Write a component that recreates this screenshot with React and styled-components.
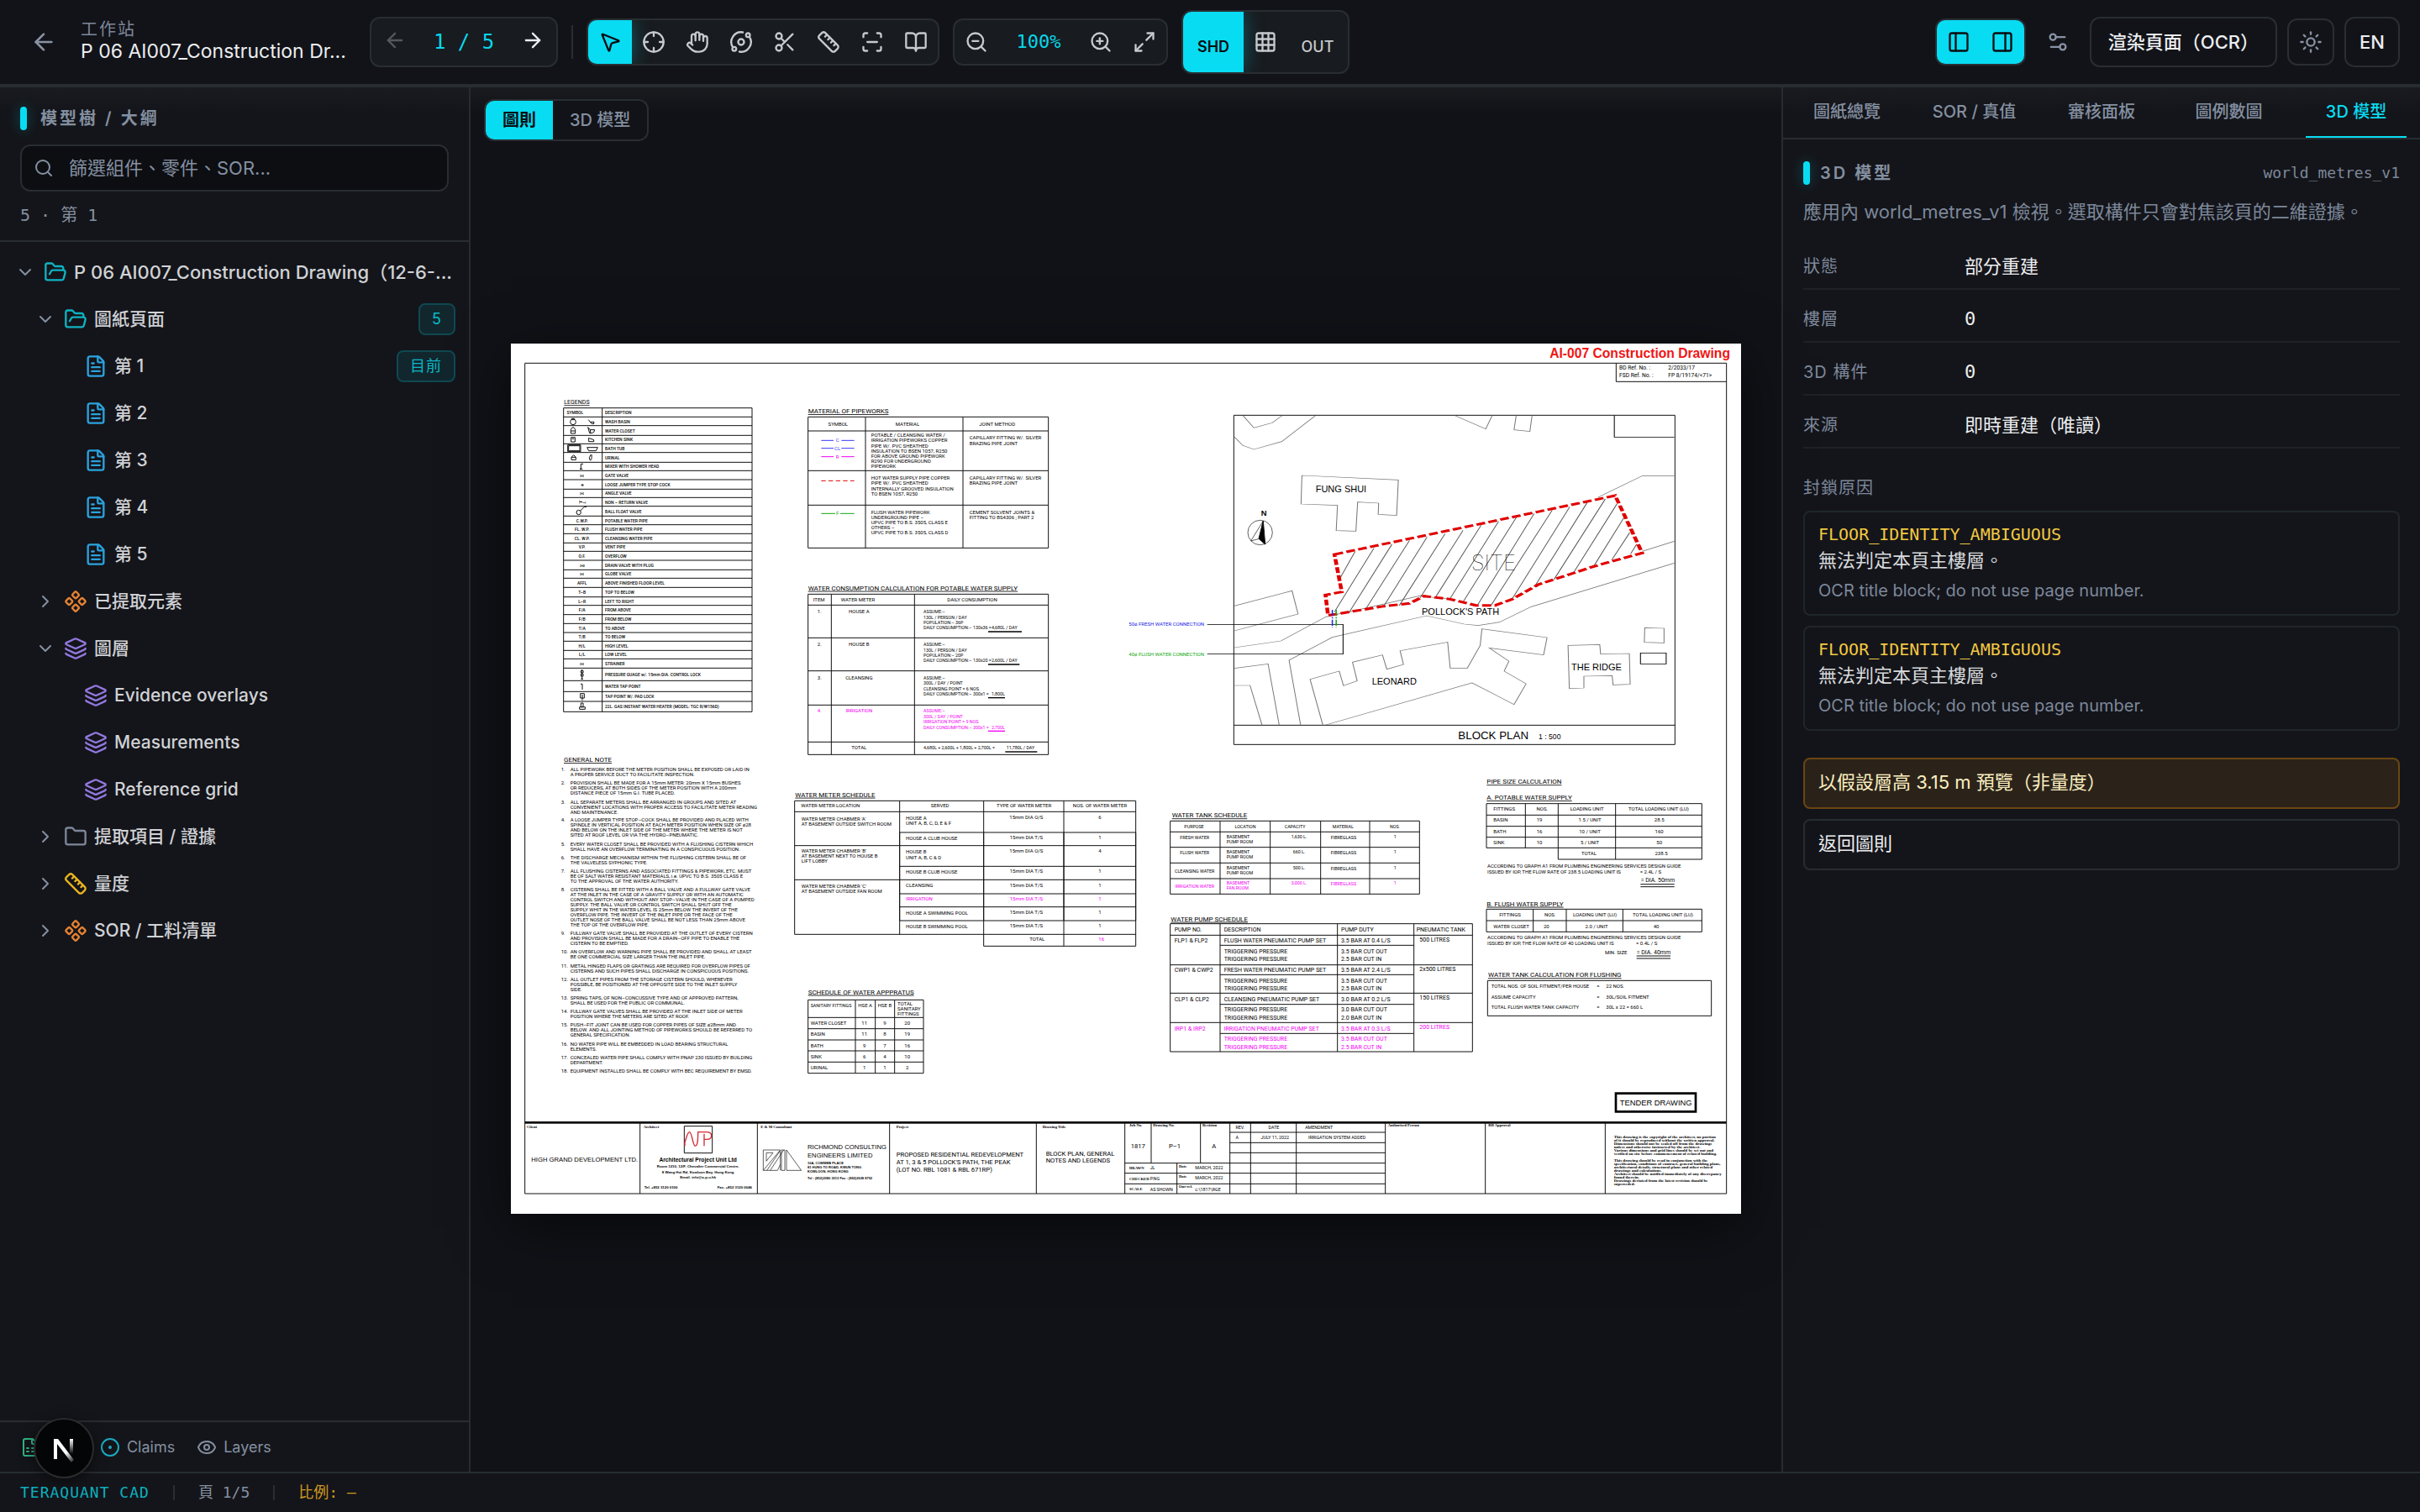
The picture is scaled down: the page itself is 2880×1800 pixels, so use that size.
import React from "react";
import styled, { createGlobalStyle, css } from "styled-components";
import {
  ArrowLeft,
  ArrowRight,
  BookOpen,
  ChevronDown,
  ChevronRight,
  CircleDot,
  Component,
  Crosshair,
  Eye,
  FileSpreadsheet,
  FileText,
  Folder,
  FolderOpen,
  Grid3x3,
  Hand,
  Layers,
  Maximize2,
  MousePointer2,
  Orbit,
  PanelLeft,
  PanelRight,
  Ruler,
  ScanLine,
  Scissors,
  Search,
  Settings2,
  Sun,
  ZoomIn,
  ZoomOut,
} from "lucide-react";

const GlobalStyle = createGlobalStyle`
  * {
    box-sizing: border-box;
  }

  body {
    margin: 0;
    background: #111217;
    color: #eceef0;
    font-family: "Inter", "Noto Sans CJK TC", sans-serif;
    font-size: 22px;
    line-height: 32px;
  }

  button,
  input {
    font: inherit;
    color: inherit;
    background: none;
    border: none;
    padding: 0;
    margin: 0;
  }

  button {
    cursor: pointer;
  }

  svg {
    display: block;
    flex: none;
  }
`;

const mono = css`
  font-family: "DejaVu Sans Mono", "Noto Sans CJK TC", monospace;
`;

/* ---------- data ---------- */

const TOOLS = [
  { label: "Select", icon: MousePointer2, active: true },
  { label: "Target", icon: Crosshair },
  { label: "Pan", icon: Hand },
  { label: "Orbit", icon: Orbit },
  { label: "Section", icon: Scissors },
  { label: "Measure", icon: Ruler },
  { label: "Scan", icon: ScanLine },
  { label: "Notes", icon: BookOpen },
];

const TREE = [
  { level: 0, open: true, icon: FolderOpen, color: "#0fb3c2", text: "P 06 AI007_Construction Drawing（12-6-..." },
  { level: 1, open: true, icon: FolderOpen, color: "#0fb3c2", text: "圖紙頁面", badge: "5" },
  { level: 2, icon: FileText, color: "#2ba3df", text: "第 1", badge: "目前" },
  { level: 2, icon: FileText, color: "#2ba3df", text: "第 2" },
  { level: 2, icon: FileText, color: "#2ba3df", text: "第 3" },
  { level: 2, icon: FileText, color: "#2ba3df", text: "第 4" },
  { level: 2, icon: FileText, color: "#2ba3df", text: "第 5" },
  { level: 1, open: false, icon: Component, color: "#e58233", text: "已提取元素" },
  { level: 1, open: true, icon: Layers, color: "#9279e0", text: "圖層" },
  { level: 2, icon: Layers, color: "#9279e0", text: "Evidence overlays" },
  { level: 2, icon: Layers, color: "#9279e0", text: "Measurements" },
  { level: 2, icon: Layers, color: "#9279e0", text: "Reference grid" },
  { level: 1, open: false, icon: Folder, color: "#7d889a", text: "提取項目 / 證據" },
  { level: 1, open: false, icon: Ruler, color: "#e9b320", text: "量度" },
  { level: 1, open: false, icon: Component, color: "#e58233", text: "SOR / 工料清單" },
];

const TABS = ["圖紙總覽", "SOR / 真值", "審核面板", "圖例數圖", "3D 模型"];

const FACTS = [
  ["狀態", "部分重建"],
  ["樓層", "0"],
  ["3D 構件", "0"],
  ["來源", "即時重建（唯讀）"],
];

const BLOCKERS = [1, 2];

/* ---------- shell ---------- */

const Shell = styled.div`
  display: grid;
  grid-template-rows: auto minmax(0, 1fr) auto;
  height: 100vh;
`;

const Header = styled.header`
  display: flex;
  align-items: center;
  gap: 16px;
  height: 104px;
  padding: 0 24px;
  background: #121318;
  border-bottom: 4px solid #272d31;
`;

const BackButton = styled.button`
  display: grid;
  place-items: center;
  width: 56px;
  height: 56px;
  color: #8892a3;
`;

const Heading = styled.div`
  width: 328px;
  padding-bottom: 4px;
`;

const Crumb = styled.div`
  font-size: 20px;
  line-height: 26px;
  letter-spacing: 2px;
  color: #7d889a;
`;

const Title = styled.h1`
  margin: 0;
  font-size: 23px;
  line-height: 26px;
  font-weight: 400;
  white-space: nowrap;
`;

const Group = styled.div`
  display: flex;
  flex: none;
  align-items: stretch;
  border: 2px solid #282e32;
  border-radius: 12px;
  overflow: hidden;
  background: #181b1f;
`;

const Pager = styled(Group)`
  width: 224px;
  height: 60px;
  padding: 0 2px;
  justify-content: space-between;
`;

const Readout = styled.span`
  ${mono}
  display: grid;
  place-items: center;
  width: 96px;
  font-size: ${(p) => (p.$large ? 24 : 22)}px;
  color: #06d8ec;
`;

const Tool = styled.button`
  display: grid;
  place-items: center;
  width: 52px;
  height: 52px;
  color: ${(p) => (p.$active ? "#0b0d11" : "#c6c9cd")};

  &:disabled {
    color: #53585f;
  }

  ${(p) =>
    p.$active &&
    css`
      background: #08dcf2;
      box-shadow: 0 0 24px rgba(8, 220, 242, 0.35);
    `}
`;

const ModeTool = styled(Tool)`
  width: ${(p) => (p.$wide ? 72 : 52)}px;
  height: 72px;
  padding-top: ${(p) => (p.$wide ? 12 : 0)}px;
  font-size: 18px;
  font-weight: ${(p) => (p.$active ? 600 : 500)};
`;

const Separator = styled.span`
  flex: none;
  width: 2px;
  height: ${(p) => (p.$small ? 18 : 40)}px;
  background: #282e32;
`;

const HeaderEnd = styled.div`
  display: flex;
  align-items: center;
  gap: 12px;
  margin-left: auto;
`;

const GhostButton = styled.button`
  display: grid;
  place-items: center;
  height: 56px;
  width: ${(p) => (p.$bare ? 52 : 56)}px;
  color: #8892a3;
  border: ${(p) => (p.$bare ? "none" : "2px solid #282e32")};
  border-radius: 12px;
`;

const TextButton = styled.button`
  height: 60px;
  padding: 0 ${(p) => (p.$tight ? 16 : 20)}px;
  font-weight: 500;
  border: 2px solid #282e32;
  border-radius: 12px;
`;

const Workspace = styled.div`
  display: grid;
  grid-template-columns: 560px minmax(0, 1fr) 760px;
  min-height: 0;
`;

const panelGlow = css`
  background: linear-gradient(#191b1f, #14151a 30px);
`;

/* ---------- left panel ---------- */

const Sidebar = styled.aside`
  display: flex;
  flex-direction: column;
  min-height: 0;
  border-right: 2px solid #272b30;
  ${panelGlow}
`;

const SidebarHead = styled.div`
  padding: 22px 24px 14px;
  border-bottom: 2px solid #272d31;
`;

const SectionTitle = styled.h2`
  display: flex;
  align-items: center;
  gap: ${(p) => p.$gap}px;
  margin: 0;
  font-size: 20px;
  line-height: 30px;
  font-weight: 600;
  letter-spacing: 3px;
  color: #8490a1;

  &::before {
    content: "";
    width: 8px;
    height: 28px;
    border-radius: 4px;
    background: #08dcf2;
    box-shadow: 0 0 16px rgba(8, 220, 242, 0.3);
  }
`;

const SearchBox = styled.label`
  display: flex;
  align-items: center;
  gap: 18px;
  height: 56px;
  margin-top: 16px;
  padding: 0 14px;
  color: #8490a1;
  background: #0d0e12;
  border: 2px solid #272d31;
  border-radius: 12px;

  input {
    flex: 1;
    min-width: 0;
    outline: none;
  }

  input::placeholder {
    color: #8490a1;
    opacity: 1;
  }
`;

const Position = styled.p`
  ${mono}
  margin: 12px 0 0;
  font-size: 20px;
  line-height: 32px;
  color: #8490a1;
`;

const Tree = styled.ul`
  flex: 1;
  min-height: 0;
  margin: 0;
  padding: 8px 16px 8px 18px;
  list-style: none;
`;

const TreeRow = styled.li`
  display: flex;
  align-items: center;
  height: 56px;
  padding-left: ${(p) => p.$level * 24}px;
  font-size: ${(p) => (p.$level ? 21 : 22)}px;
  color: #d0d2d6;
`;

const Twisty = styled.span`
  width: 24px;
  height: 24px;
  margin-right: 10px;
  color: #8490a1;
`;

const TreeLabel = styled.span`
  flex: 1;
  min-width: 0;
  padding-left: 8px;
  font-weight: 500;
  white-space: nowrap;
`;

const Badge = styled.span`
  padding: 0 14px;
  font-size: 18px;
  line-height: 34px;
  letter-spacing: 1px;
  color: #0cb9c9;
  background: #11272d;
  border: 2px solid #104850;
  border-radius: 8px;
`;

const SidebarFoot = styled.div`
  display: flex;
  align-items: center;
  gap: 26px;
  height: 61px;
  padding: 0 24px;
  border-top: 2px solid #272d31;
`;

const FootItem = styled.span`
  display: flex;
  align-items: center;
  gap: 8px;
  font-size: 18px;
  color: #8490a1;
`;

/* ---------- canvas ---------- */

const Canvas = styled.main`
  position: relative;
  display: flex;
  align-items: center;
  justify-content: center;
  padding: 0 48px 2px;
  min-width: 0;
  background: linear-gradient(#191b1f, #111217 30px);
`;

const ViewSwitch = styled(Group)`
  position: absolute;
  top: 14px;
  left: 16px;
  background: #121318;
`;

const ViewButton = styled.button`
  height: 46px;
  padding: 0 20px;
  font-size: 20px;
  font-weight: ${(p) => (p.$active ? 600 : 500)};
  color: ${(p) => (p.$active ? "#0b0d11" : "#8490a1")};
  background: ${(p) => (p.$active ? "#08dcf2" : "none")};
`;

const Sheet = styled.svg`
  width: 100%;
  background: #ffffff;
  box-shadow: 0 16px 64px rgba(0, 0, 0, 0.55);

  text {
    stroke: none;
  }
`;

/* ---------- right panel ---------- */

const Inspector = styled.aside`
  border-left: 2px solid #272b30;
  ${panelGlow}
`;

const TabBar = styled.div`
  display: flex;
  justify-content: space-between;
  height: 62px;
  padding: 0 16px;
  border-bottom: 2px solid #272d31;
`;

const Tab = styled.button`
  width: 120px;
  height: 60px;
  white-space: nowrap;
  font-size: 20px;
  font-weight: 500;
  color: ${(p) => (p.$active ? "#08dcf2" : "#8490a1")};
  border-bottom: 2px solid ${(p) => (p.$active ? "#08dcf2" : "transparent")};
`;

const InspectorBody = styled.div`
  padding: 24px;
`;

const TitleLine = styled.div`
  display: flex;
  align-items: center;
  justify-content: space-between;
`;

const Schema = styled.span`
  ${mono}
  font-size: 18px;
  color: #7d889a;
`;

const Lead = styled.p`
  margin: 14px 0;
  line-height: 32px;
  color: #7d889a;
`;

const Facts = styled.dl`
  margin: 0;
`;

const Fact = styled.div`
  display: grid;
  grid-template-columns: 192px 1fr;
  align-items: center;
  height: 63px;
  padding-top: 8px;
  border-bottom: 2px solid #1e2126;

  dt {
    font-size: 20px;
    letter-spacing: 1px;
    color: #7d889a;
  }

  dd {
    margin: 0;
  }
`;

const Digits = styled.span`
  ${mono}
`;

const SubTitle = styled.h3`
  margin: 32px 0 12px;
  font-size: 20px;
  line-height: 30px;
  font-weight: 400;
  letter-spacing: 1px;
  color: #7d889a;
`;

const Blocker = styled.div`
  margin-bottom: 12px;
  padding: 12px 16px;
  border: 2px solid #20272b;
  border-radius: 8px;
  color: #d8dadd;

  code {
    ${mono}
    display: block;
    font-size: 20px;
    line-height: 28px;
    color: #f3c942;
  }

  p {
    margin: 0;
    line-height: 35px;
  }

  small {
    display: block;
    margin-top: 2px;
    font-size: 20px;
    line-height: 32px;
    color: #7d889a;
  }
`;

const WideButton = styled.button`
  display: block;
  width: 100%;
  height: 61px;
  margin-top: ${(p) => (p.$amber ? 32 : 12)}px;
  padding: 0 16px 3px;
  text-align: left;
  border: 2px solid ${(p) => (p.$amber ? "#6b4613" : "#272d31")};
  border-radius: 8px;
  color: ${(p) => (p.$amber ? "#fbefc0" : "#eceef0")};
  background: ${(p) => (p.$amber ? "#2b231a" : "none")};
`;

/* ---------- status bar ---------- */

const StatusBar = styled.footer`
  ${mono}
  display: flex;
  align-items: center;
  gap: 28px;
  height: 48px;
  padding: 0 24px;
  font-size: 18px;
  color: #8490a1;
  background: #14151a;
  border-top: 2px solid #272d31;
`;

const Brand = styled.span`
  letter-spacing: 1px;
  color: #0cb0bf;
`;

const Scale = styled.span`
  color: #cf9a1f;
`;

const DevBadge = styled.button`
  position: fixed;
  left: 40px;
  bottom: 40px;
  width: 72px;
  height: 72px;
  border-radius: 50%;
  background: #040506;
  border: 2px solid #2a2b2c;
  box-shadow: 0 4px 16px rgba(0, 0, 0, 0.5);
`;

/* ---------- drawing sheet ---------- */
// Sheet units: 3 per screen pixel at 100% zoom.

const CAD = `"Roboto", "Liberation Sans", sans-serif`;
const ARIAL = `"Liberation Sans", sans-serif`;
const SERIF = `"Liberation Serif", serif`;
const MAGENTA = "#f400f4";

const T = ({ x, y, s = 18, c = "#000", a = "start", u, f, w, children }) => (
  <text
    x={x}
    y={y}
    fontSize={s}
    fill={c}
    textAnchor={a}
    fontFamily={f}
    fontWeight={w}
    textDecoration={u ? "underline" : undefined}
  >
    {children}
  </text>
);

const Lines = ({ x, ys, rows, ...rest }) =>
  rows.map((row, i) => (
    <T key={i} x={x} y={Array.isArray(ys) ? ys[i] : ys + i * 18} {...rest}>
      {row}
    </T>
  ));

const Mesh = ({ xs, ys }) => {
  const right = xs[xs.length - 1];
  const bottom = ys[ys.length - 1];
  const d =
    xs.map((x) => `M${x} ${ys[0]}V${bottom}`).join("") +
    ys.map((y) => `M${xs[0]} ${y}H${right}`).join("");
  return <path d={d} />;
};

const LEGEND_YS = [
  230, 262, 293, 328, 358, 389, 424, 454, 486, 520, 550, 581, 616, 647, 679, 712, 742, 774, 808,
  838, 871, 905, 935, 968, 1000, 1032, 1063, 1096, 1126, 1159, 1204, 1243, 1278, 1315,
];

const LEGEND = [
  ["SYMBOL", "DESCRIPTION"],
  ["", "WASH BASIN"],
  ["", "WATER CLOSET"],
  ["", "KITCHEN SINK"],
  ["", "BATH TUB"],
  ["", "URINAL"],
  ["", "MIXER WITH SHOWER HEAD"],
  ["⋈", "GATE VALVE"],
  ["⋇", "LOOSE JUMPER TYPE STOP COCK"],
  ["⋈", "ANGLE VALVE"],
  ["⊢⊣", "NON – RETURN VALVE"],
  ["", "BALL FLOAT VALVE"],
  ["C.W.P.", "POTABLE WATER PIPE"],
  ["FL. W.P.", "FLUSH WATER PIPE"],
  ["CL. W.P.", "CLEANSING WATER PIPE"],
  ["V.P.", "VENT PIPE"],
  ["O.F.", "OVERFLOW"],
  ["⋈ı", "DRAIN VALVE WITH PLUG"],
  ["⋈", "GLOBE VALVE"],
  ["AFFL", "ABOVE FINISHED FLOOR LEVEL"],
  ["T–B", "TOP TO BELOW"],
  ["L–R", "LEFT TO RIGHT"],
  ["F/A", "FROM ABOVE"],
  ["F/B", "FROM BELOW"],
  ["T/A", "TO ABOVE"],
  ["T/B", "TO BELOW"],
  ["H/L", "HIGH LEVEL"],
  ["L/L", "LOW LEVEL"],
  ["⋈", "STRAINER"],
  ["", "PRESSURE GUAGE w/. 15mm DIA. CONTROL LOCK"],
  ["", "WATER TAP POINT"],
  ["", "TAP POINT W/. PAD LOCK"],
  ["", "22L. GAS INSTANT WATER HEATER (MODEL: TGC R/W156D)"],
];

const Legends = () => (
  <g>
    <T x={190} y={217} s={21} u>LEGENDS</T>
    <Mesh xs={[188, 326, 861]} ys={LEGEND_YS} />
    {LEGEND.map(([symbol, text], i) => {
      const y = Math.round((LEGEND_YS[i] + LEGEND_YS[i + 1]) / 2) + 6;
      return (
        <g key={i} fontWeight="500">
          <T x={i ? 254 : 229} y={y} s={15} a="middle">{symbol}</T>
          <T x={336} y={y} s={15}>{text}</T>
        </g>
      );
    })}
    <circle cx="222" cy="280" r="10" />
    <path d="M216 268h12M222 268v6M277 272l6 8h14M283 280q4 9 12 6M297 280l-2 8" />
    <path d="M214 321v-14q8-16 16 0v14zM214 312h16M275 299l8 9h16q0 10-10 12h-8zM283 308l2 12" />
    <path d="M215 335h14v16h-14zM218 340h8M278 336v14h18v-6l-16-6" />
    <path d="M203 362h46v24h-46zM206 365h40v18h-40zM272 371h38l-6 12h-26z" />
    <path d="M216 406h16v9h-16zM216 406l8-8 8 8M286 396q-10 12-4 20 8 4 6-20" />
    <path d="M258 430h-8v18h-4h10" />
    <circle cx="242" cy="603" r="8" />
    <path d="M248 597l14-14h8" />
    <path d="M254 1164v34M250 1198h8" />
    <circle cx="254" cy="1172" r="5" />
    <circle cx="254" cy="1184" r="5" />
    <path d="M249 1216h6v20M248 1250h14v16h-14zM255 1254v20M250 1284h8v14h-8zM245 1298h20v8h-20z" />
  </g>
);

const Materials = () => (
  <g>
    <T x={1061} y={249} s={24} u>MATERIAL OF PIPEWORKS</T>
    <Mesh xs={[1061, 1266, 1614, 1919]} ys={[262, 312, 454, 577, 730]} />
    <T x={1168} y={294} a="middle">SYMBOL</T>
    <T x={1416} y={294} a="middle">MATERIAL</T>
    <T x={1736} y={294} a="middle">JOINT METHOD</T>
    <path stroke="#3a3af5" d="M1108 346h44M1180 346h46M1108 374h44M1180 374h46" />
    <path stroke={MAGENTA} d="M1108 404h44M1180 404h46" />
    <path stroke="#e00000" strokeDasharray="16 10" d="M1108 490h118" />
    <path stroke="#12a812" d="M1108 607h50M1176 607h50" />
    <T x={1166} y={352} a="middle" c="#3a3af5">C</T>
    <T x={1166} y={380} a="middle" c="#3a3af5">CL</T>
    <T x={1166} y={410} a="middle" c={MAGENTA}>R</T>
    <T x={1166} y={613} a="middle" c="#12a812">F</T>
    <Lines
      x={1286}
      ys={[333, 352, 371, 389, 408, 427, 445]}
      rows={[
        "POTABLE / CLEANSING WATER /",
        "IRRIGATION PIPEWORKS COPPER",
        "PIPE W/. PVC SHEATHED",
        "INSULATION TO BSEN 1057, R250",
        "FOR ABOVE GROUND PIPEWORK",
        "R290 FOR UNDERGROUND",
        "PIPEWORK",
      ]}
    />
    <Lines
      x={1286}
      ys={[485, 505, 524, 543]}
      rows={["HOT WATER SUPPLY PIPE COPPER", "PIPE W/. PVC SHEATHED", "INTERNALLY GROOVED INSULATION", "TO BSEN 1057, R250"]}
    />
    <Lines
      x={1286}
      ys={[608, 626, 644, 663, 681]}
      rows={[
        "FLUSH WATER PIPEWORK",
        "UNDERGROUND PIPE –",
        "UPVC PIPE TO B.S. 3505, CLASS E",
        "OTHERS –",
        "UPVC PIPE TO B.S. 3505, CLASS D",
      ]}
    />
    <Lines x={1637} ys={[343, 362]} rows={["CAPILLARY FITTING W/. SILVER", "BRAZING PIPE JOINT"]} />
    <Lines x={1637} ys={[485, 505]} rows={["CAPILLARY FITTING W/. SILVER", "BRAZING PIPE JOINT"]} />
    <Lines x={1637} ys={[608, 626]} rows={["CEMENT SOLVENT JOINTS &", "FITTING TO BS4306 ; PART 2"]} />
  </g>
);

const CONSUMPTION = [
  [963, "1.", "HOUSE A", "130L / PERSON / DAY", "POPULATION:– 36P", "130x36", "4,680L / DAY", 120],
  [1080, "2.", "HOUSE B", "130L / PERSON / DAY", "POPULATION:– 20P", "130x20", "2,600L / DAY", 112],
  [1199, "3.", "CLEANSING", "300L / DAY / POINT", "CLEANSING POINT = 6 NOS.", "300x1", "1,800L", 60],
  [1318, "4.", "IRRIGATION", "300L / DAY / POINT", "IRRIGATION POINT = 9 NOS.", "300x1", "2,700L", 60],
];

const Consumption = () => (
  <g>
    <T x={1061} y={881} s={24} u>WATER CONSUMPTION CALCULATION FOR POTABLE WATER SUPPLY</T>
    <Mesh xs={[1061, 1144, 1441, 1919]} ys={[895, 934, 1051, 1169, 1291, 1423, 1468]} />
    <T x={1100} y={921} a="middle">ITEM</T>
    <T x={1239} y={921} a="middle">WATER METER</T>
    <T x={1647} y={921} a="middle">DAILY CONSUMPTION</T>
    {CONSUMPTION.map(([y, no, name, rate, count, sum, total, len]) => {
      const c = name === "IRRIGATION" ? MAGENTA : undefined;
      return (
        <g key={no}>
          <T x={1102} y={y} a="middle" c={c}>{no}</T>
          <T x={1243} y={y} a="middle" c={c}>{name}</T>
          <Lines x={1473} ys={[y, y + 20, y + 39, y + 58]} s={16} c={c} rows={["ASSUME:–", rate, count, `DAILY CONSUMPTION:– ${sum} =`]} />
          <T x={1716} y={y + 58} s={16} c={c}>{total}</T>
          <path d={`M1704 ${y + 66}h${len}`} stroke={c || "#000"} strokeWidth="4" />
        </g>
      );
    })}
    <T x={1243} y={1448} a="middle">TOTAL</T>
    <T x={1473} y={1448} s={16}>4,680L + 2,600L + 1,800L + 2,700L =</T>
    <T x={1769} y={1448} s={16}>11,780L / DAY</T>
    <path d="M1765 1458h114" strokeWidth="5" />
  </g>
);

const NOTES = [
  [1527, ["ALL PIPEWORK BEFORE THE METER POSITION SHALL BE EXPOSED OR LAID IN", "A PROPER SERVICE DUCT TO FACILITATE INSPECTION."]],
  [1576, ["PROVISION SHALL BE MADE FOR A 15mm METER: 20mm X 15mm BUSHES", "OR REDUCERS, AT BOTH SIDES OF THE METER POSITION WITH A 200mm", "DISTANCE PIECE OF 15mm G.I. TUBE PLACED."]],
  [1643, ["ALL SEPARATE METERS SHALL BE ARRANGED IN GROUPS AND SITED AT", "CONVENIENT LOCATIONS WITH PROPER ACCESS TO FACILITATE METER READING", "AND MAINTENANCE."]],
  [1708, ["A LOOSE JUMPER TYPE STOP–COCK SHALL BE PROVIDED AND PLACED WITH", "SPINDLE IN VERTICAL POSITION AT EACH METER POSITION WHEN SIZE OF ø28", "AND BELOW ON THE INLET SIDE OF THE METER WHERE THE METER IS NOT", "SITED AT ROOF LEVEL OR VIA THE HYDRO–PNEUMATIC."]],
  [1794, ["EVERY WATER CLOSET SHALL BE PROVIDED WITH A FLUSHING CISTERN WHICH", "SHALL HAVE AN OVERFLOW TERMINATING IN A CONSPICUOUS POSITION."]],
  [1841, ["THE DISCHARGE MECHANISM WITHIN THE FLUSHING CISTERN SHALL BE OF", "THE VALVELESS SYPHONIC TYPE."]],
  [1890, ["ALL FLUSHING CISTERNS AND ASSOCIATED FITTINGS & PIPEWORK, ETC. MUST", "BE OF SALT WATER RESISTANT MATERIALS, i.e. UPVC TO B.S. 3505 CLASS E", "TO THE APPROVAL OF THE WATER AUTHORITY."]],
  [1957, ["CISTERNS SHALL BE FITTED WITH A BALL VALVE AND A FULLWAY GATE VALVE", "AT THE INLET IN THE CASE OF A GRAVITY SUPPLY OR WITH AN AUTOMATIC", "CONTROL SWITCH AND WITHOUT ANY STOP–VALVE IN THE CASE OF A PUMPED", "SUPPLY. THE BALL VALVE OR CONTROL SWITCH SHALL SHUT OFF THE", "SUPPLY WHIT IN THE WATER LEVEL IS 25mm BELOW THE INVERT OF THE", "OVERFLOW PIPE. THE INVERT OF THE INLET PIPE OR THE FACE OF THE", "OUTLET NOSE OF THE BALL VALVE SHALL BE NOT LESS THAN 25mm ABOVE", "THE TOP OF THE OVERFLOW PIPE."]],
  [2112, ["FULLWAY GATE VALVE SHALL BE PROVIDED AT THE OUTLET OF EVERY CISTERN", "AND PROVISION SHALL BE MADE FOR A DRAIN–OFF PIPE TO ENABLE THE", "CISTERN TO BE EMPTIED."]],
  [2179, ["AN OVERFLOW AND WARNING PIPE SHALL BE PROVIDED AND SHALL AT LEAST", "BE ONE COMMERCIAL SIZE LARGER THAN THE INLET PIPE."]],
  [2228, ["METAL HINGED FLAPS OR GRATINGS ARE REQUIRED FOR OVERFLOW PIPES OF", "CISTERNS AND SUCH PIPES SHALL DISCHARGE IN CONSPICUOUS POSITIONS."]],
  [2276, ["ALL OUTLET PIPES FROM THE STORAGE CISTERN SHOULD, WHEREVER", "POSSIBLE, BE POSITIONED AT THE OPPOSITE SIDE TO THE INLET SUPPLY", "SIDE."]],
  [2342, ["SPRING TAPS, OF NON–CONCUSSIVE TYPE AND OF APPROVED PATTERN,", "SHALL BE USED FOR THE PUBLIC OR COMMUNAL."]],
  [2392, ["FULLWAY GATE VALVES SHALL BE PROVIDED AT THE INLET SIDE OF METER", "POSITION WHERE THE METERS ARE SITED AT ROOF."]],
  [2439, ["PUSH–FIT JOINT CAN BE USED FOR COPPER PIPES OF SIZE ø28mm AND", "BELOW. AND ALL JOINTING METHOD OF PIPEWORKS SHOULD BE REFERRED TO", "GENERAL SPECIFICATION."]],
  [2507, ["NO WATER PIPE WILL BE EMBEDDED IN LOAD BEARING STRUCTURAL", "ELEMENTS."]],
  [2555, ["CONCEALED WATER PIPE SHALL COMPLY WITH PNAP 230 ISSUED BY BUILDING", "DEPARTMENT."]],
  [2604, ["EQUIPMENT INSTALLED SHALL BE COMPLY WITH BEC REQUIREMENT BY EMSD."]],
];

const GeneralNotes = () => (
  <g>
    <T x={189} y={1494} s={24} u>GENERAL NOTE</T>
    {NOTES.map(([y, rows], i) => (
      <g key={y}>
        <T x={179} y={y}>{i + 1}.</T>
        <Lines x={212} ys={y} rows={rows} />
      </g>
    ))}
  </g>
);

const METERS = [
  [1698, "HOUSE A", "O/S", "6"],
  [1770, "HOUSE A CLUB HOUSE", "T/S", "1"],
  [1819, "HOUSE B", "O/S", "4"],
  [1891, "HOUSE B CLUB HOUSE", "T/S", "1"],
  [1940, "CLEANSING", "T/S", "1"],
  [1988, "IRRIGATION", "T/S", "1"],
  [2037, "HOUSE A SWIMMING POOL", "T/S", "1"],
  [2085, "HOUSE B SWIMMING POOL", "T/S", "1"],
];

const MeterSchedule = () => (
  <g>
    <T x={1015} y={1619} s={24} u>WATER METER SCHEDULE</T>
    <Mesh xs={[1388, 1688, 1974, 2231]} ys={[1746, 1867, 1965, 2012, 2061]} />
    <path d="M1013 1633H2231V2152H1688V2110M1013 1633V2110H2231M1013 1672H2231M1013 1793H2231M1013 1915H2231M1388 1633V2110M1688 1633V2110M1974 1633V2152" />
    <T x={1036} y={1657}>WATER METER LOCATION</T>
    <T x={1532} y={1657} a="middle">SERVED</T>
    <T x={1832} y={1657} a="middle">TYPE OF WATER METER</T>
    <T x={2103} y={1657} a="middle">NOS. OF WATER METER</T>
    <Lines x={1037} ys={1703} rows={["WATER METER CHABMER 'A'", "AT BASEMENT OUTSIDE SWITCH ROOM"]} />
    <Lines x={1037} ys={1818} rows={["WATER METER CHABMER 'B'", "AT BASEMENT NEXT TO HOUSE B", "LIFT LOBBY"]} />
    <Lines x={1037} ys={1945} rows={["WATER METER CHABMER 'C'", "AT BASEMENT OUTSIDE FAN ROOM"]} />
    <T x={1410} y={1719}>UNIT A, B, C, D, E & F</T>
    <T x={1410} y={1841}>UNIT A, B, C & D</T>
    {METERS.map(([y, name, type, count]) => {
      const c = name === "IRRIGATION" ? MAGENTA : undefined;
      return (
        <g key={y}>
          <T x={1410} y={y + 2} c={c}>{name}</T>
          <T x={1840} y={y} a="middle" c={c}>15mm DIA {type}</T>
          <T x={2103} y={y} a="middle" c={c}>{count}</T>
        </g>
      );
    })}
    <T x={1879} y={2134} a="middle">TOTAL</T>
    <T x={2108} y={2134} a="middle" c={MAGENTA}>16</T>
  </g>
);

const APPARATUS = [
  [2434, "WATER CLOSET", 11, 9, 20],
  [2473, "BASIN", 11, 8, 19],
  [2513, "BATH", 9, 7, 16],
  [2552, "SINK", 6, 4, 10],
  [2591, "URINAL", 1, 1, 2],
];

const Apparatus = () => (
  <g>
    <T x={1061} y={2324} s={24} u>SCHEDULE OF WATER APPPRATUS</T>
    <Mesh xs={[1061, 1230, 1301, 1370, 1473]} ys={[2344, 2407, 2447, 2487, 2526, 2566, 2606]} />
    <T x={1070} y={2370} s={16}>SANITARY FITTINGS</T>
    <T x={1265} y={2370} a="middle">HSE A</T>
    <T x={1335} y={2370} a="middle">HSE B</T>
    <Lines x={1380} ys={[2364, 2382, 2401]} rows={["TOTAL", "SANITARY", "FITTINGS"]} />
    {APPARATUS.map(([y, name, a, b, total]) => (
      <g key={name}>
        <T x={1070} y={y}>{name}</T>
        <T x={1262} y={y} a="middle">{a}</T>
        <T x={1335} y={y} a="middle">{b}</T>
        <T x={1415} y={y} a="middle">{total}</T>
      </g>
    ))}
  </g>
);

const BlockPlan = () => (
  <g>
    <path d="M2581 256H4156V1432H2581zM2581 1363H4156" />
    {/* survey outlines keep their own grid, stretched along x only */}
    <g transform="translate(2076 -27) scale(1.53 1)" stroke="#777">
      <g strokeWidth="2">
        <path d="M352 285L377 328 420 310 443 284M331 360L351 391 377 405 442 377 520 285M846 284L918 332 933 284M989 284L984 335 1021 341 1026 284" />
        <path d="M489 498L714 514 710 641 667 637 668 597 619 593 615 697 569 695 572 605 487 600z" />
        <path d="M1180 576L1284 499H1358M1283 769L1358 733M331 964L466 910 480 993 331 1053M331 1113L440 1089 545 1003 560 997 600 985 770 926M770 930L840 940M331 1187L410 1171 436 1390M331 1248H368L396 1390M486 1390L459 1158 560 1076 780 999 868 1029 900 1034 950 1022 1024 967 1358 811" />
        <path d="M538 1390L508 1226 576 1197 586 1249 618 1232 607 1165 677 1139 687 1190 726 1173 718 1124 829 1093 835 1186H875L905 1105 909 1046 1061 1077 1053 1139 926 1114 972 1161 961 1197 1012 1242 984 1316 886 1239 545 1389" />
        <path d="M1110 1105L1184 1102 1186 1136 1253 1134 1255 1244 1215 1246 1213 1213 1147 1215V1257L1113 1259zM1289 1042L1334 1044V1096L1288 1094z" />
      </g>
      <path stroke="#000" strokeWidth="2" d="M1279 1132H1339V1171H1279zM1218 284V361H1358M268 1030H585V1136H268" />
      <path
        stroke="#555"
        strokeWidth="2"
        d="M613 770L578 865M657 758L565 985M699 744L600 985M740 730L640 970M781 718L680 965M823 706L716 963M865 694L765 935M907 676L802 930M948 662L835 937M990 646L865 950M1031 634L900 958M1073 622L930 963M1114 610L980 938M1155 594L1034 890M1197 582L1077 870M1224 600L1123 845M1240 650L1170 822M1254 702L1212 800M1270 744L1256 778"
      />
      <path
        stroke="#e00000"
        strokeWidth="9"
        strokeDasharray="21 8"
        d="M565 780L1220 570 1283 775 1170 823 1040 888 980 940 940 962H895L835 940 774 929 740 955 680 965 550 998 544 925 582 914z"
      />
      <path stroke="#2424e8" strokeWidth="3" strokeDasharray="22 4 5 4" d="M560 978V1040" />
      <path stroke="#12a812" strokeWidth="3" strokeDasharray="22 4 5 4" d="M569 978V1040" />
    </g>
    <circle cx="2675" cy="675" r="44" strokeWidth="2" />
    <path d="M2686 633L2642 705 2672 697z" strokeWidth="2" />
    <path d="M2686 633L2693 717 2670 697z" fill="#000" />
    <g fontFamily={ARIAL}>
      <T x={2688} y={616} s={28} w="700" a="middle">N</T>
      <T x={2873} y={532} s={33}>FUNG SHUI</T>
      <T x={3252} y={969} s={33}>POLLOCK'S PATH</T>
      <T x={3074} y={1219} s={33}>LEONARD</T>
      <T x={3786} y={1166} s={33}>THE RIDGE</T>
      <T x={3382} y={1413} s={40}>BLOCK PLAN</T>
      <T x={3669} y={1413} s={26}>1 : 500</T>
    </g>
    <T x={3428} y={809} s={78} w="100" f={`"Inter", sans-serif`}>SITE</T>
    <T x={2206} y={1008} c="#2424e8">50ø FRESH WATER CONNECTION</T>
    <T x={2206} y={1115} c="#12a812">40ø FLUSH WATER CONNECTION</T>
  </g>
);

const TANKS = [
  [1767, "FRESH WATER", "PUMP ROOM", "1,630 L."],
  [1822, "FLUSH WATER", "PUMP ROOM", "660 L."],
  [1879, "CLEANSING WATER", "PUMP ROOM", "500 L."],
  [1933, "IRRIGATION WATER", "FAN ROOM", "3,000 L."],
];

const TankSchedule = () => (
  <g>
    <T x={2360} y={1693} s={24} u>WATER TANK SCHEDULE</T>
    <Mesh xs={[2354, 2532, 2711, 2891, 3066, 3244]} ys={[1705, 1744, 1799, 1855, 1911, 1966]} />
    {[[2439, "PURPOSE"], [2622, "LOCATION"], [2799, "CAPACITY"], [2971, "MATERIAL"], [3156, "NOS."]].map(([x, t]) => (
      <T key={t} x={x} y={1730} s={16} a="middle">{t}</T>
    ))}
    {TANKS.map(([y, name, room, size]) => {
      const c = name === "IRRIGATION WATER" ? MAGENTA : undefined;
      return (
        <g key={y}>
          <T x={2441} y={y > 1850 ? y + 12 : y + 2} s={16} a="middle" c={c}>{name}</T>
          <Lines x={2555} ys={y} s={16} c={c} rows={["BASEMENT", room]} />
          <T x={2814} y={y} s={16} a="middle" c={c}>{size}</T>
          <T x={2973} y={y + 2} s={16} a="middle" c={c}>FIBREGLASS</T>
          <T x={3157} y={y} s={16} a="middle" c={c}>1</T>
        </g>
      );
    })}
  </g>
);

const PUMPS = [
  [2140, "FLP1 & FLP2", "FLUSH WATER PNEUMATIC PUMP SET", "3.5 BAR AT 0.4 L/S", "3.5", "2.5", "500 LITRES"],
  [2244, "CWP1 & CWP2", "FRESH WATER PNEUMATIC PUMP SET", "3.5 BAR AT 2.4 L/S", "3.5", "2.5", "2x500 LITRES"],
  [2348, "CLP1 & CLP2", "CLEANSING PNEUMATIC PUMP SET", "3.0 BAR AT 0.2 L/S", "3.0", "2.0", "150 LITRES"],
  [2453, "IRP1 & IRP2", "IRRIGATION PNEUMATIC PUMP SET", "3.5 BAR AT 0.3 L/S", "3.5", "2.5", "200 LITRES"],
];

const PumpSchedule = () => (
  <g>
    <T x={2356} y={2063} s={24} u>WATER PUMP SCHEDULE</T>
    <Mesh xs={[2354, 2532, 2951, 3224, 3433]} ys={[2072, 2113, 2219, 2320, 2425, 2529]} />
    <path d="M2532 2149H3224M2532 2254H3224M2532 2360H3224M2532 2464H3224" />
    <T x={2369} y={2100} s={21}>PUMP NO.</T>
    <T x={2546} y={2100} s={21}>DESCRIPTION</T>
    <T x={2964} y={2100} s={21}>PUMP DUTY</T>
    <T x={3233} y={2100} s={21}>PNEUMATIC TANK</T>
    {PUMPS.map(([y, no, name, duty, hi, lo, tank]) => {
      const c = no.startsWith("IRP") ? MAGENTA : undefined;
      const ys = [y, y + 38, y + 66];
      return (
        <g key={no}>
          <T x={2369} y={y} s={21} c={c}>{no}</T>
          <Lines x={2546} ys={ys} s={21} c={c} rows={[name, "TRIGGERING PRESSURE", "TRIGGERING PRESSURE"]} />
          <Lines x={2964} ys={ys} s={21} c={c} rows={[duty, `${hi} BAR CUT OUT`, `${lo} BAR CUT IN`]} />
          <T x={3244} y={y - 4} s={21} c={c}>{tank}</T>
        </g>
      );
    })}
  </g>
);

const PipeSizes = () => (
  <g>
    <T x={3484} y={1573} s={24} u>PIPE SIZE CALCULATION</T>
    <T x={3484} y={1629} s={24} u>A. POTABLE WATER SUPPLY</T>
    <Mesh xs={[3483, 3622, 3739, 3944, 4252]} ys={[1643, 1684, 1724, 1763, 1801]} />
    <path d="M3739 1801V1842H4252V1801M3944 1801V1842" />
    <T x={3508} y={1668}>FITTINGS</T>
    <T x={3682} y={1668} a="middle">NOS.</T>
    <T x={3842} y={1668} a="middle">LOADING UNIT</T>
    <T x={4098} y={1668} a="middle">TOTAL LOADING UNIT (LU)</T>
    {[[1708, "BASIN", 19, "1.5 / UNIT", "28.5"], [1748, "BATH", 16, "10 / UNIT", "160"], [1788, "SINK", 10, "5 / UNIT", "50"]].map(
      ([y, name, nos, unit, total]) => (
        <g key={name}>
          <T x={3508} y={y}>{name}</T>
          <T x={3672} y={y} a="middle">{nos}</T>
          <T x={3852} y={y} a="middle">{unit}</T>
          <T x={4100} y={y} a="middle">{total}</T>
        </g>
      )
    )}
    <T x={3849} y={1828} a="middle">TOTAL</T>
    <T x={4107} y={1828} a="middle">238.5</T>
    <Lines x={3486} ys={[1871, 1892]} rows={["ACCORDING TO GRAPH A1 FROM PLUMBING ENGINEERING SERVICES DESIGN GUIDE", "ISSUED BY IOP, THE FLOW RATE OF 238.5 LOADING UNIT IS"]} />
    <T x={4031} y={1892}>= 2.4L / S</T>
    <T x={4034} y={1923} s={21}>= DIA. 50mm</T>
    <path d="M4033 1931H4154M4033 1940H4154M4019 2187H4140M4019 2196H4140" />
    <T x={3484} y={2009} s={24} u>B. FLUSH WATER SUPPLY</T>
    <Mesh xs={[3483, 3650, 3768, 3970, 4252]} ys={[2020, 2061, 2101]} />
    <T x={3567} y={2047} a="middle">FITTINGS</T>
    <T x={3710} y={2047} a="middle">NOS.</T>
    <T x={3870} y={2047} a="middle">LOADING UNIT (LU)</T>
    <T x={4113} y={2047} a="middle">TOTAL LOADING UNIT (LU)</T>
    <T x={3508} y={2087}>WATER CLOSET</T>
    <T x={3697} y={2087} a="middle">20</T>
    <T x={3876} y={2087} a="middle">2.0 / UNIT</T>
    <T x={4089} y={2087} a="middle">40</T>
    <Lines x={3486} ys={[2128, 2149]} rows={["ACCORDING TO GRAPH A1 FROM PLUMBING ENGINEERING SERVICES DESIGN GUIDE", "ISSUED BY IOP, THE FLOW RATE OF 40 LOADING UNIT IS"]} />
    <T x={4017} y={2149}>= 0.4L / S</T>
    <T x={3906} y={2180}>MIN. SIZE</T>
    <T x={4019} y={2180} s={21}>= DIA. 40mm</T>
    <T x={3489} y={2263} s={24} u>WATER TANK CALCULATION FOR FLUSHING</T>
    <path d="M3487 2275H4286V2401H3487z" />
    <Lines x={3500} ys={[2300, 2339, 2377]} rows={["TOTAL NOS. OF SOIL FITMENT/PER HOUSE", "ASSUME CAPACITY", "TOTAL FLUSH WATER TANK CAPACITY"]} />
    <Lines x={3877} ys={[2300, 2339, 2377]} rows={["=", "=", "="]} />
    <Lines x={3910} ys={[2300, 2339, 2377]} rows={["22 NOS.", "30L/SOIL FITMENT", "30L x 22 = 660 L"]} />
  </g>
);

const COPYRIGHT = [
  "This drawing is the copyright of the architect, no portion",
  "of it should be reproduced without the written approval.",
  "Dimensions should not be scaled off from the drawings",
  "unless and otherwise instructed by the architect.",
  "Various dimensions and grid lines should be set out and",
  "verified on site before commencement of related building.",
  "",
  "This drawing should be read in conjunction with the",
  "specification, conditions of contract, general building plans,",
  "architectural details, structural plans and other related",
  "drawings and calculations.",
  "Architect should be notified immediately of any discrepancy",
  "found therein.",
  "Drawings deviated from the latest revision should be",
  "superseded.",
];

const BLOCK_LABELS = [
  [57, 2803, "Client"],
  [473, 2803, "Architect"],
  [892, 2803, "E & M Consultant"],
  [1376, 2803, "Project"],
  [1898, 2803, "Drawing Title"],
  [2208, 2797, "Job No."],
  [2293, 2797, "Drawing No."],
  [2469, 2797, "Revision"],
  [3131, 2797, "Authorised Person"],
  [3490, 2797, "BD Approval"],
  [2208, 2948, "DRAWN"],
  [2208, 2989, "CHECKED"],
  [2208, 3024, "SCALE"],
  [2385, 2942, "Date"],
  [2385, 2978, "Date"],
  [2385, 3016, "Our ref."],
];

const TitleBlock = () => (
  <g>
    <path d="M50 2782H4340" strokeWidth="8" />
    <path d="M461 2782V3036M880 2782V3036M1352 2782V3036M1876 2782V3036M2192 2782V3036M2567 2782V3036M2641 2782V3036M2804 2782V3036M3122 2782V3036M3479 2782V3036M3907 2782V3036" />
    <path d="M2286 2782V2927M2462 2782V2927M2378 2927V3036M2192 2927H3122M2192 2963H3122M2192 3001H3122M2567 2817H3122M2567 2854H3122M2567 2890H3122" />
    <g fontFamily={SERIF} fontWeight="700">
      {BLOCK_LABELS.map(([x, y, text]) => (
        <T key={x + text + y} x={x} y={y} s={14}>{text}</T>
      ))}
      {COPYRIGHT.map((row, i) => (
        <T key={i} x={3938} y={2839 + i * 12} s={15}>{row}</T>
      ))}
    </g>
    <g fontFamily={ARIAL}>
      <T x={73} y={2923} s={23}>HIGH GRAND DEVELOPMENT LTD.</T>
      <T x={1059} y={2878} s={23}>RICHMOND CONSULTING</T>
      <T x={1059} y={2906} s={23}>ENGINEERS LIMITED</T>
      <g fontWeight="700">
        <T x={668} y={2922} s={20} a="middle">Architectural Project Unit Ltd</T>
        <T x={668} y={2943} s={13} a="middle">Room 1210, 12/F, Chevalier Commercial Centre,</T>
        <T x={668} y={2963} s={13} a="middle">8 Wang Hoi Rd, Kowloon Bay, Hong Kong</T>
        <T x={668} y={2981} s={13} a="middle">Email. info@a-p-u.hk</T>
        <T x={476} y={3018} s={13}>Tel. +852 3120 0100</T>
        <T x={861} y={3018} s={13} a="end">Fax. +852 3120 0046</T>
        <Lines x={1059} ys={[2930, 2946, 2961, 2984]} s={12} rows={["10A, COMWEB PLACE", "81 HUNG TO ROAD, KWUN TONG", "KOWLOON, HONG KONG", "Tel : (852)2380 3313 Fax : (852)2638 8752"]} />
      </g>
    </g>
    <path d="M619 2795H719V2891H619z" />
    <path stroke="#d42a35" strokeWidth="4" d="M621 2866V2852C626 2840 630 2816 638 2816S650 2866 658 2866 668 2850 668 2816H698Q716 2816 716 2829T700 2842H690M690 2822V2866" />
    <path d="M901 2880H962L901 2953zM912 2890H936L912 2920zM962 2882L914 2953M974 2880L926 2953M962 2886V2953M966 2880H978V2953H966zM984 2880L1037 2953H984zM901 2953H952L962 2932" strokeWidth="2" />
    <Lines x={1376} ys={[2904, 2931, 2958]} s={23} rows={["PROPOSED RESIDENTIAL REDEVELOPMENT", "AT 1, 3 & 5 POLLOCK'S PATH, THE PEAK", "(LOT NO. RBL 1081 & RBL 671RP)"]} />
    <Lines x={1910} ys={[2900, 2924]} s={23} rows={["BLOCK PLAN, GENERAL", "NOTES AND LEGENDS"]} />
    <T x={2213} y={2875} s={23}>1817</T>
    <T x={2370} y={2875} s={23} a="middle">P–1</T>
    <T x={2510} y={2875} s={23} a="middle">A</T>
    <Lines x={2282} ys={[2948, 2989, 3026]} s={16} rows={["JL", "P.NG", "AS SHOWN"]} />
    <Lines x={2443} ys={[2948, 2985, 3026]} s={16} rows={["MARCH, 2022", "MARCH, 2022", "c:\\1817\\RGE"]} />
    <T x={2603} y={2804} s={16} a="middle">REV.</T>
    <T x={2724} y={2804} s={16} a="middle">DATE</T>
    <T x={2885} y={2804} s={16} a="middle">AMENDMENT</T>
    <T x={2593} y={2841} s={16} a="middle">A</T>
    <T x={2728} y={2841} s={16} a="middle">JULY 11, 2022</T>
    <T x={2847} y={2841} s={16}>IRRIGATION SYSTEM ADDED</T>
  </g>
);

const Drawing = () => (
  <Sheet viewBox="0 0 4392 3108" role="img" aria-label="AI-007 Construction Drawing">
    <g fill="none" stroke="#111" strokeWidth="3" fontFamily={CAD}>
      <path d="M50 70H4340V3036H50zM3946 70V136H4340" />
      <path d="M3945 2678H4230V2743H3945z" stroke="#000" strokeWidth="8" />
      <T x={4353} y={51} s={47} c="#f01414" a="end" w="700" f={ARIAL}>AI-007 Construction Drawing</T>
      <Lines x={3957} ys={[94, 120]} s={20} rows={["BD Ref. No. :", "FSD Ref. No. :"]} />
      <Lines x={4132} ys={[94, 120]} s={20} rows={["2/2033/17", "FP 8/19174/<71>"]} />
      <T x={4088} y={2720} s={28} a="middle" f={ARIAL}>TENDER DRAWING</T>
      <Legends />
      <Materials />
      <Consumption />
      <GeneralNotes />
      <MeterSchedule />
      <Apparatus />
      <BlockPlan />
      <TankSchedule />
      <PumpSchedule />
      <PipeSizes />
      <TitleBlock />
    </g>
  </Sheet>
);

/* ---------- page ---------- */

const icon = { size: 28, strokeWidth: 2 };

const TopBar = () => (
  <Header>
    <BackButton aria-label="Back">
      <ArrowLeft size={32} strokeWidth={2} />
    </BackButton>
    <Heading>
      <Crumb>工作站</Crumb>
      <Title>P 06 AI007_Construction Dr...</Title>
    </Heading>
    <Pager>
      <Tool aria-label="Previous page" disabled><ArrowLeft {...icon} /></Tool>
      <Readout $large>1 / 5</Readout>
      <Tool aria-label="Next page"><ArrowRight {...icon} color="#eceef0" /></Tool>
    </Pager>
    <Separator />
    <Group>
      {TOOLS.map(({ label, icon: Icon, active }) => (
        <Tool key={label} aria-label={label} $active={active}>
          <Icon {...icon} />
        </Tool>
      ))}
    </Group>
    <Group>
      <Tool aria-label="Zoom out"><ZoomOut {...icon} /></Tool>
      <Readout>100%</Readout>
      <Tool aria-label="Zoom in"><ZoomIn {...icon} /></Tool>
      <Tool aria-label="Fit"><Maximize2 {...icon} /></Tool>
    </Group>
    <Group>
      <ModeTool $wide $active>SHD</ModeTool>
      <ModeTool aria-label="Grid"><Grid3x3 {...icon} /></ModeTool>
      <ModeTool $wide>OUT</ModeTool>
    </Group>
    <HeaderEnd>
      <Group>
        <Tool $active aria-label="Left panel"><PanelLeft {...icon} /></Tool>
        <Tool $active aria-label="Right panel"><PanelRight {...icon} /></Tool>
      </Group>
      <GhostButton $bare aria-label="Settings"><Settings2 {...icon} /></GhostButton>
      <TextButton>渲染頁面（OCR）</TextButton>
      <GhostButton aria-label="Theme"><Sun {...icon} /></GhostButton>
      <TextButton $tight>EN</TextButton>
    </HeaderEnd>
  </Header>
);

const ModelTree = () => (
  <Sidebar>
    <SidebarHead>
      <SectionTitle $gap={16}>模型樹 / 大綱</SectionTitle>
      <SearchBox>
        <Search size={24} strokeWidth={2} />
        <input type="search" aria-label="篩選" placeholder="篩選組件、零件、SOR..." />
      </SearchBox>
      <Position>5 · 第 1</Position>
    </SidebarHead>
    <Tree>
      {TREE.map(({ level, open, icon: Icon, color, text, badge }) => (
        <TreeRow key={text} $level={level}>
          <Twisty>
            {open === true && <ChevronDown size={24} />}
            {open === false && <ChevronRight size={24} />}
          </Twisty>
          <Icon {...icon} color={color} />
          <TreeLabel>{text}</TreeLabel>
          {badge && <Badge>{badge}</Badge>}
        </TreeRow>
      ))}
    </Tree>
    <SidebarFoot>
      <FootItem><FileSpreadsheet size={24} color="#2fb583" />SOR</FootItem>
      <FootItem><CircleDot size={24} color="#1ba9c0" />Claims</FootItem>
      <FootItem><Eye size={24} />Layers</FootItem>
    </SidebarFoot>
  </Sidebar>
);

const ModelPanel = () => (
  <Inspector>
    <TabBar>
      {TABS.map((tab) => (
        <Tab key={tab} $active={tab === "3D 模型"}>{tab}</Tab>
      ))}
    </TabBar>
    <InspectorBody>
      <TitleLine>
        <SectionTitle $gap={12}>3D 模型</SectionTitle>
        <Schema>world_metres_v1</Schema>
      </TitleLine>
      <Lead>應用內 world_metres_v1 檢視。選取構件只會對焦該頁的二維證據。</Lead>
      <Facts>
        {FACTS.map(([name, value]) => (
          <Fact key={name}>
            <dt>{name}</dt>
            <dd>{value === "0" ? <Digits>0</Digits> : value}</dd>
          </Fact>
        ))}
      </Facts>
      <SubTitle>封鎖原因</SubTitle>
      {BLOCKERS.map((id) => (
        <Blocker key={id}>
          <code>FLOOR_IDENTITY_AMBIGUOUS</code>
          <p>無法判定本頁主樓層。</p>
          <small>OCR title block; do not use page number.</small>
        </Blocker>
      ))}
      <WideButton $amber>以假設層高 3.15 m 預覽（非量度）</WideButton>
      <WideButton>返回圖則</WideButton>
    </InspectorBody>
  </Inspector>
);

const App = () => (
  <>
    <GlobalStyle />
    <Shell lang="zh-Hant">
      <TopBar />
      <Workspace>
        <ModelTree />
        <Canvas>
          <Drawing />
          <ViewSwitch>
            <ViewButton $active>圖則</ViewButton>
            <ViewButton>3D 模型</ViewButton>
          </ViewSwitch>
        </Canvas>
        <ModelPanel />
      </Workspace>
      <StatusBar>
        <Brand>TERAQUANT CAD</Brand>
        <Separator $small />
        <span>頁 1/5</span>
        <Separator $small />
        <Scale>比例: —</Scale>
      </StatusBar>
    </Shell>
    <DevBadge aria-label="Dev tools">
      <svg width="68" height="68" viewBox="0 0 68 68" fill="none">
        <defs>
          <linearGradient id="fadeDown" x1="0" y1="0" x2="0" y2="1">
            <stop offset="0" stopColor="#fff" />
            <stop offset="1" stopColor="#fff" stopOpacity="0" />
          </linearGradient>
          <linearGradient id="fadeTail" x1="22" y1="24" x2="46" y2="50" gradientUnits="userSpaceOnUse">
            <stop offset="0.6" stopColor="#fff" />
            <stop offset="1" stopColor="#fff" stopOpacity="0.1" />
          </linearGradient>
        </defs>
        <path d="M22 23h5l19 25-3 3-17-22v18h-4z" fill="url(#fadeTail)" />
        <path d="M41 23h4v18h-4z" fill="url(#fadeDown)" />
      </svg>
    </DevBadge>
  </>
);

export default App;
